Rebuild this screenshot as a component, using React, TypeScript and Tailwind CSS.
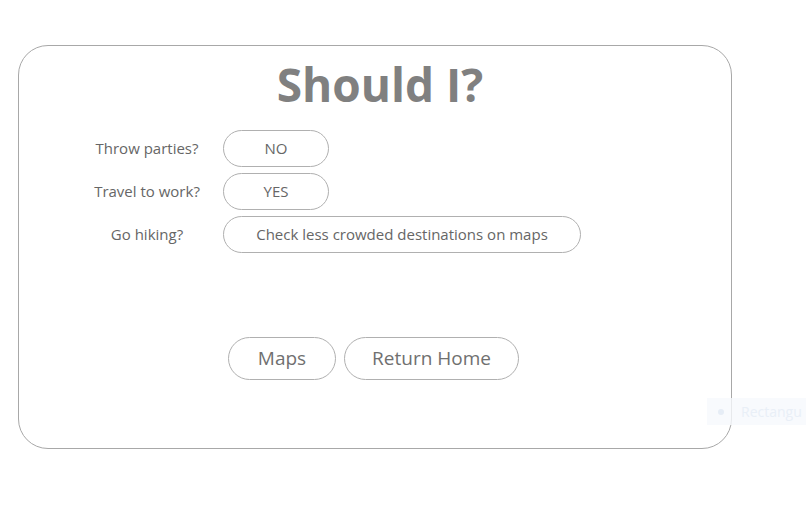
import React from 'react';

const rows = [
  { label: 'Throw parties?', answer: 'NO', width: 'w-[106px]' },
  { label: 'Travel to work?', answer: 'YES', width: 'w-[106px]' },
  { label: 'Go hiking?', answer: 'Check less crowded destinations on maps', width: 'w-[358px]' },
];

export default function App() {
  return (
    <div className="relative w-[806px] h-[518px] bg-white overflow-hidden" style={{ fontFamily: '"Open Sans", "Noto Sans", sans-serif' }}>
      <div className="pt-[45px] pl-[18px]">
        {/* Card */}
        <div className="w-[714px] h-[404px] rounded-[30px] border border-[#a8a8a8] bg-white flex flex-col">
          <h1 className="mt-[8px] ml-[10px] text-center text-[46px] leading-[60px] font-bold text-[#808080]">Should I?</h1>

          <div className="mt-[16px] flex flex-col gap-[6px]">
            {rows.map((row) => (
              <div key={row.label} className="flex items-center">
                <span className="ml-[74px] w-[108px] text-center text-[15px] text-[#666666]">{row.label}</span>
                <button
                  className={`ml-[22px] h-[37px] ${row.width} rounded-full border border-[#b0b0b0] bg-white text-[15px] text-[#666666]`}
                >
                  {row.answer}
                </button>
              </div>
            ))}
          </div>

          <div className="mt-[84px] ml-[209px] flex gap-[8px]">
            <button className="h-[43px] w-[108px] rounded-full border border-[#b0b0b0] bg-white text-[19px] text-[#707070]">
              Maps
            </button>
            <button className="h-[43px] w-[175px] rounded-full border border-[#b0b0b0] bg-white text-[19px] text-[#707070]">
              Return Home
            </button>
          </div>
        </div>
      </div>

      {/* faint snipping overlay */}
      <div className="absolute left-[707px] top-[398px] w-[99px] h-[27px] bg-[#f6f9fd]/80 flex items-center gap-[17px] pl-[11px] overflow-hidden">
        <span className="shrink-0 w-[6px] h-[6px] rounded-full bg-[#e6edf6]" />
        <span className="shrink-0 text-[14px] text-[#e9eff7]">Rectangu</span>
      </div>
    </div>
  );
}
